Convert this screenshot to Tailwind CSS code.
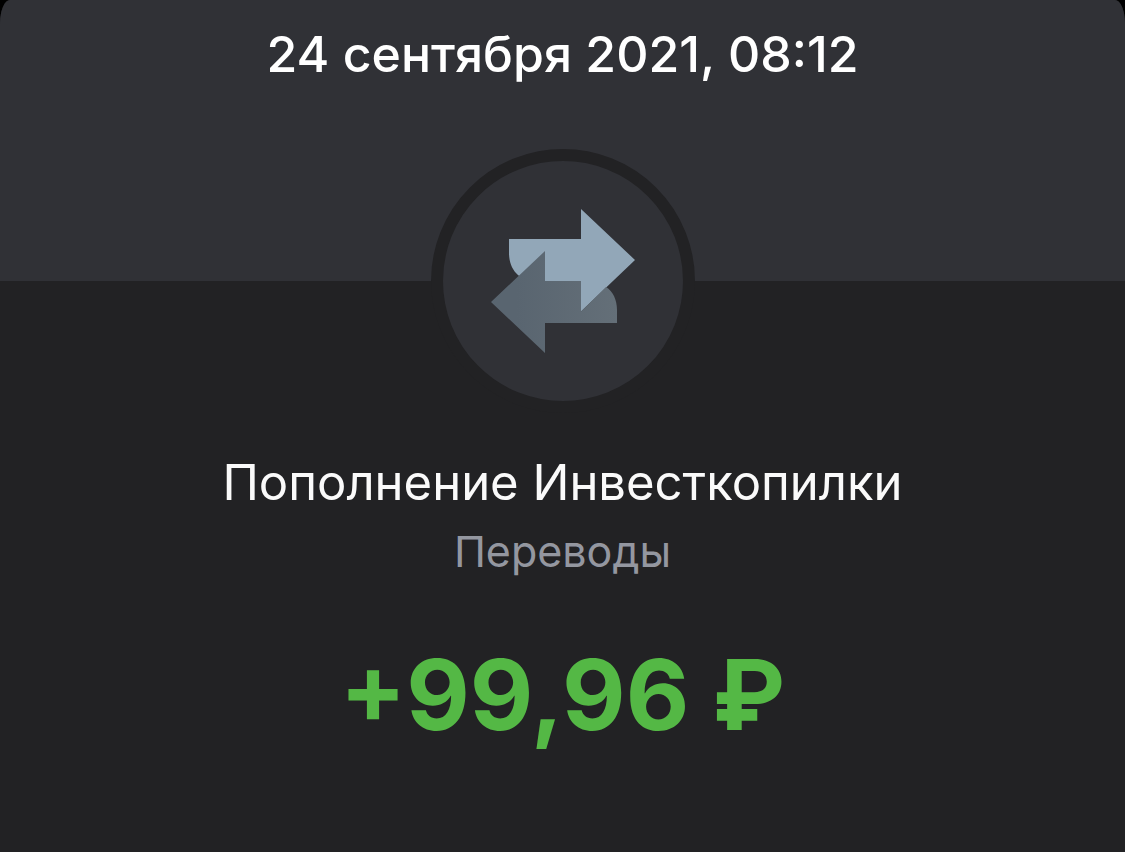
<!DOCTYPE html>
<html lang="ru">

  <head>
    <meta charset="UTF-8">
    <meta name="viewport" content="width=device-width, initial-scale=1.0">
    <script src="https://cdn.jsdelivr.net/npm/@tailwindcss/browser@4"></script>
    <title>Пополнение Инвесткопилки</title>
  </head>

  <body class="bg-black font-['Inter','Liberation_Sans',sans-serif]">
    <div class="flex flex-col min-h-screen bg-[#222224] rounded-t-[10px_24px] overflow-hidden text-center">
      <header class="flex flex-col items-center bg-[#303136] pt-6">
        <time datetime="2021-09-24T08:12" class="text-[50px] leading-[60px] font-medium text-white">24 сентября 2021, 08:12</time>

        <!-- operation icon, hangs over the lower edge of the header -->
        <div class="mt-[65px] -mb-[132px] size-[264px] rounded-full border-12 border-[#222224] bg-[#303136]">
          <svg class="size-full" viewBox="0 0 240 240" fill="none" xmlns="http://www.w3.org/2000/svg" aria-hidden="true">
            <defs>
              <linearGradient id="back" x1="48" y1="0" x2="174" y2="0" gradientUnits="userSpaceOnUse">
                <stop offset="0.2" stop-color="#596570"/>
                <stop offset="1" stop-color="#646f78"/>
              </linearGradient>
            </defs>
            <path d="M66 78H138V48L192 99L138 150.500V120H92C76 120 66 108 66 92Z" fill="#92a7b8"/>
            <path d="M102 90L48 141L102 192V162H174V149C174 139 170 130 163 126L138 150.500V120H102Z" fill="url(#back)"/>
          </svg>
        </div>
      </header>

      <main class="flex flex-col items-center px-6 pt-[172px] pb-12">
        <h1 class="text-[49px] leading-[60px] text-[#fafafa]">Пополнение Инвесткопилки</h1>
        <p class="mt-3 text-[43px] leading-[52px] text-[#9497a0]">Переводы</p>
        <p class="mt-[58px] text-[98px] leading-[120px] font-bold text-[#54b845]">+99,96 ₽</p>
      </main>
    </div>
  </body>
</html>
